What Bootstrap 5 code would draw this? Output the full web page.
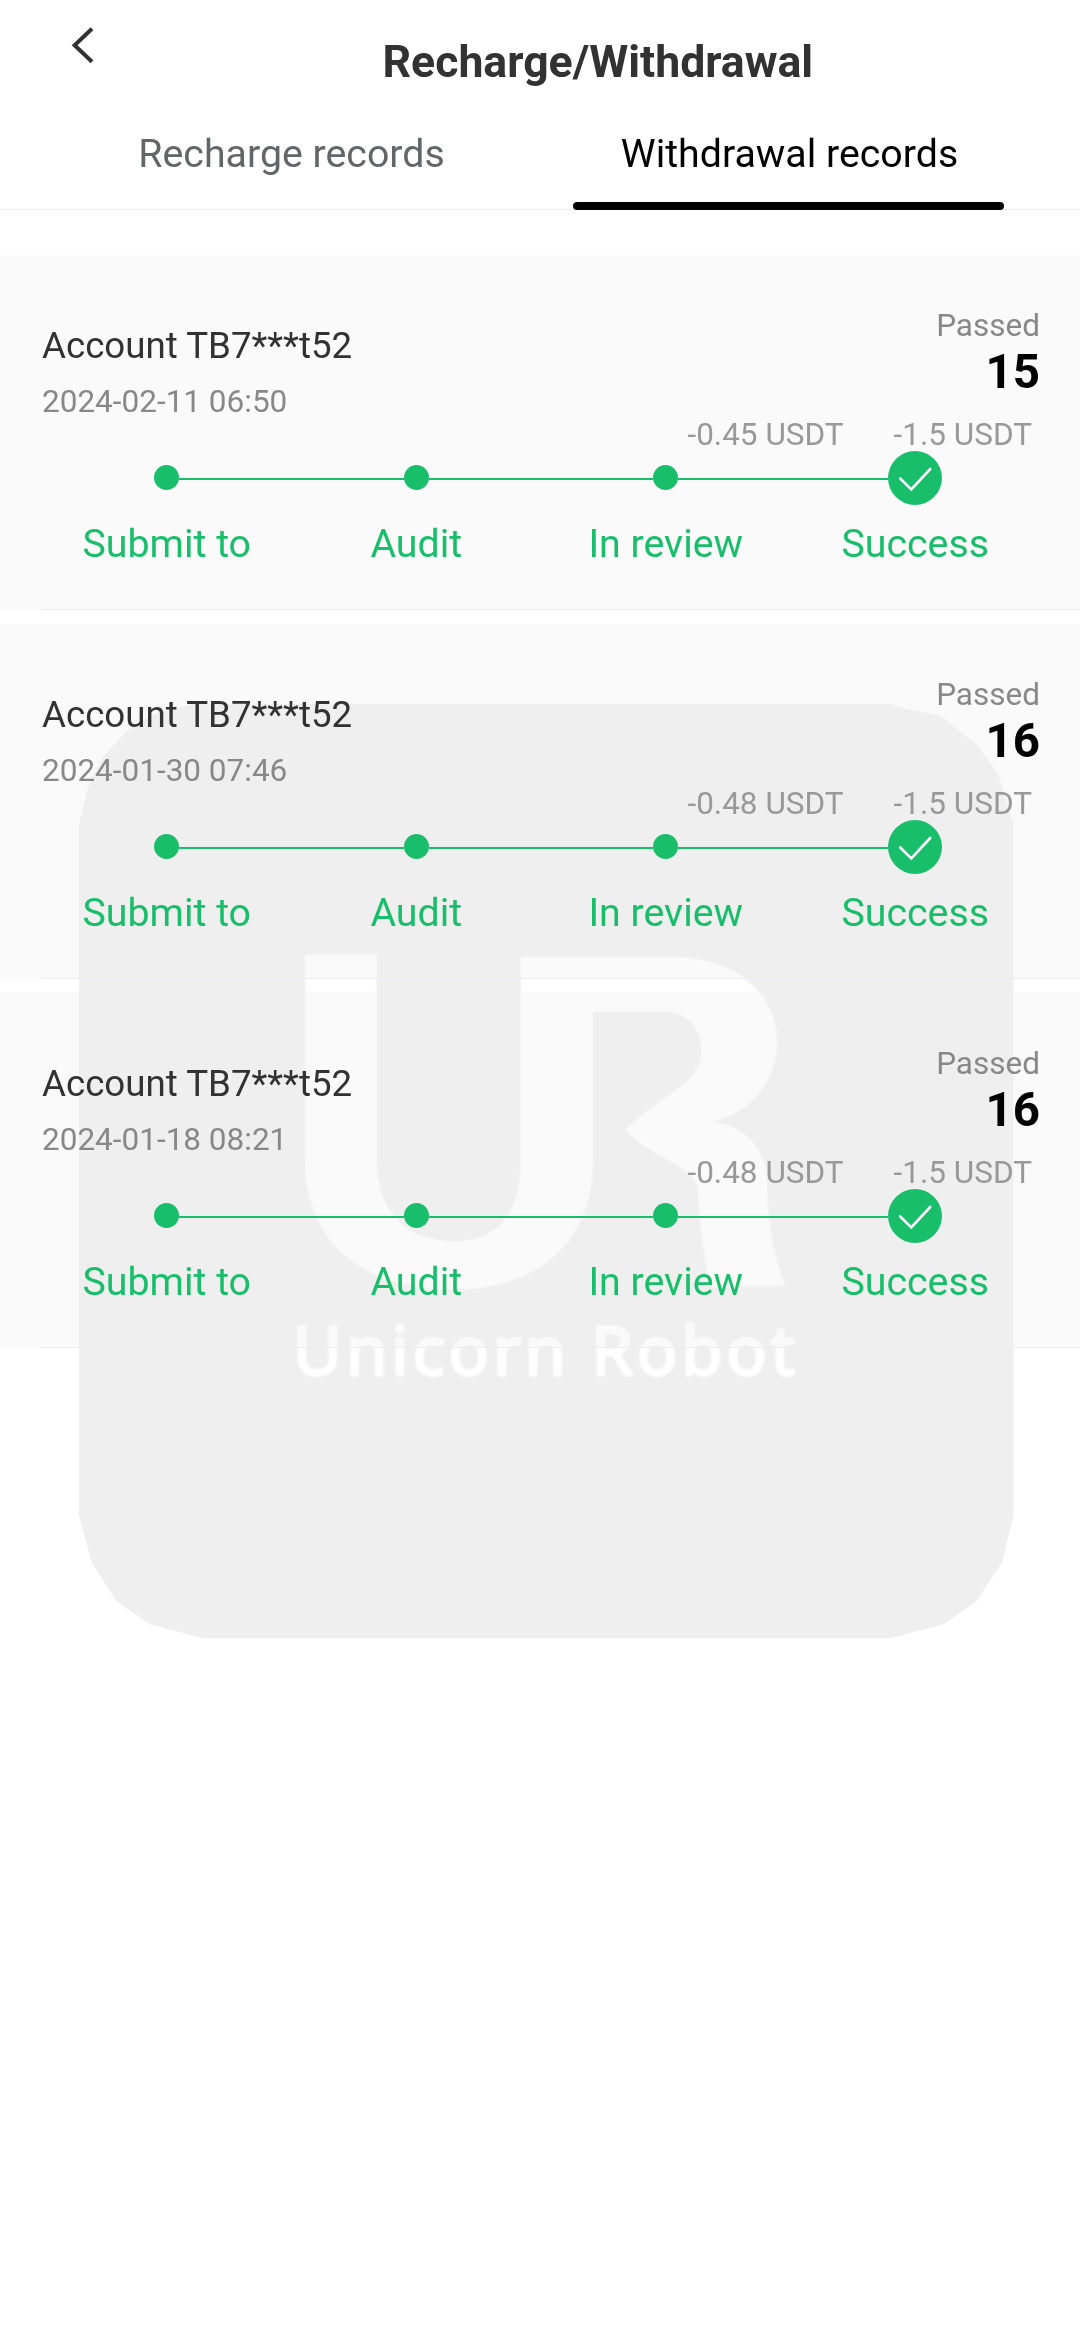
<!DOCTYPE html>
<html lang="en">
<head>
<meta charset="utf-8">
<meta name="viewport" content="width=device-width, initial-scale=1">
<title>Recharge/Withdrawal</title>
<link href="https://cdn.jsdelivr.net/npm/bootstrap@5.3.0/dist/css/bootstrap.min.css" rel="stylesheet">
<style>
  body { font-family: Roboto, sans-serif; color: #323233; background: #fff; overflow: hidden; }
  .screen { width: 1080px; height: 2340px; overflow: hidden; }
  .topbar { height: 110px; padding-left: 70px; }
  .back-icon { width: 24px; height: 40px; margin-top: 25px; flex: none; }
  .page-title { font-size: 44.6px; line-height: 60px; margin: 32px 0 0 288.5px; font-weight: 700; color: #323233; white-space: nowrap; }
  .record-tabs { height: 100px; padding: 0 43px; border-bottom: 1px solid #ebedf0; }
  .record-tabs .nav-link { padding: 19px 0 0; font-size: 39.3px; line-height: 50px; color: #646566; height: 100px; border: 0; }
  .record-tabs .nav-link.active { color: #000; }
  .tab-label { padding-left: 2px; }
  .tab-bar { width: 431px; height: 8px; border-radius: 4px; background: #000; }
  .record-list { padding-top: 45px; }
  .record { height: 355px; background: #fafafa; margin-bottom: 14px; }
  .record:nth-child(2) { margin-bottom: 13px; }
  .record:nth-child(3) { height: 356px; padding-top: 1px; }
  .record-body { height: 355px; z-index: 1; padding-left: 42px; }
  .record-inner { height: 354px; padding-right: 40px; }
  .record-info { height: 196px; }
  .account { font-size: 36.7px; line-height: 43px; margin-top: 69px; }
  .stamp { font-size: 31.5px; line-height: 41px; margin-top: 14px; color: #888; }
  .state { font-size: 31.5px; line-height: 41px; margin-top: 50px; color: #888; }
  .amount { font-size: 47.5px; line-height: 50px; font-weight: 700; color: #000; margin-top: 1px; }
  .fees { font-size: 31.5px; line-height: 41px; color: #999; margin-top: 17px; padding-right: 8px; gap: 50px; }
  .steps { color: #19be6b; height: 158px; }
  .step-node { height: 54px; width: 100%; }
  .step-line { height: 2px; background: #19be6b; flex: 1 1 0; margin-top: 2px; }
  .step-line.blank { background: transparent; }
  .step-dot { width: 25px; height: 25px; border-radius: 50%; background: #19be6b; flex: none; margin-bottom: 1px; }
  .step-check { width: 54px; height: 54px; flex: none; }
  .step-name { font-size: 39.3px; line-height: 50px; margin-top: 14px; }
  .divider { height: 1px; background: #ebedf0; }
  .watermark { left: 0; top: 0; z-index: 0; mix-blend-mode: darken; pointer-events: none; }
</style>
</head>
<body>
<div class="screen position-relative">
  <header class="topbar d-flex align-items-start">
    <svg class="back-icon" viewBox="0 0 24 40" fill="none" stroke="#323233" stroke-width="4"><path d="M22 3.8 4.6 20.2 22 36.8"/></svg>
    <h1 class="page-title">Recharge/Withdrawal</h1>
  </header>
  <nav class="record-tabs nav nav-fill flex-nowrap">
    <a class="nav-link w-50" href="#">Recharge records</a>
    <a class="nav-link active w-50 d-flex flex-column align-items-center" href="#"><span class="tab-label">Withdrawal records</span><span class="tab-bar mt-auto"></span></a>
  </nav>
  <main class="record-list" id="records"></main>

  <svg class="watermark position-absolute" width="1080" height="2340" viewBox="0 0 1080 2340">
    <path fill="#efefef" d="M193 704H891L905 708.500 941 716 977 745 998 773.500 1005 796.500 1013.500 825V1515.500L1002 1562 976 1601.700 943.500 1624.300 891 1638H202L150 1624.300 117 1601.700 91.500 1562 79 1515.500V825L89 783 103 757 127.500 730 151.500 715Z"/>
    <g fill="#fff" style="filter:blur(.9px)">
      <path d="M305.500 955H376.500V1160C376.500 1212 405 1241.700 454 1241.700C500 1241.700 521 1212 521 1160V957.300H670C738 957.300 776.500 995 776.500 1041.700C776.500 1084 748 1114 709 1122.300C745 1124 765 1150 766.500 1178C767 1217 771 1251 785 1285.700H711C703 1256 700.500 1220 698 1187C692 1164 650 1157 626 1130C664 1092 702 1085 702 1050C702 1027 686 1011.300 666 1011.300H592.500V1160C592.500 1240 540 1289 454 1289C360 1289 305.500 1240 305.500 1160Z"/>
      <text x="293" y="1375" font-family="Noto Sans, sans-serif" font-size="67" stroke="#fff" stroke-width="2.400" textLength="502" lengthAdjust="spacing">Unicorn Robot</text>
    </g>
  </svg>
</div>

<script src="https://cdn.jsdelivr.net/npm/bootstrap@5.3.0/dist/js/bootstrap.bundle.min.js"></script>
<script>
  const records = [
    { time: '2024-02-11 06:50', amount: '15', fee: '-0.45 USDT' },
    { time: '2024-01-30 07:46', amount: '16', fee: '-0.48 USDT' },
    { time: '2024-01-18 08:21', amount: '16', fee: '-0.48 USDT' }
  ];
  const names = ['Submit to', 'Audit', 'In review', 'Success'];
  const check = '<svg class="step-check" viewBox="0 0 54 54"><circle cx="27" cy="27" r="27" fill="#19be6b"/><path d="M12.200 27.500 23.300 38.400 42.200 18" fill="none" stroke="#fff" stroke-width="2.600" stroke-linecap="round"/></svg>';
  const steps = names.map((name, i) => `
    <div class="col text-center">
      <div class="step-node d-flex align-items-center">
        <span class="step-line ${i === 0 ? 'blank' : ''}"></span>
        ${i === 3 ? check : '<span class="step-dot"></span>'}
        <span class="step-line ${i === 3 ? 'blank' : ''}"></span>
      </div>
      <div class="step-name">${name}</div>
    </div>`).join('');
  document.getElementById('records').innerHTML = records.map(r => `
    <section class="record">
      <div class="record-body position-relative">
        <div class="record-inner">
          <div class="record-info d-flex justify-content-between">
            <div>
              <div class="account">Account TB7***t52</div>
              <div class="stamp">${r.time}</div>
            </div>
            <div class="text-end">
              <div class="state">Passed</div>
              <div class="amount">${r.amount}</div>
              <div class="fees d-flex justify-content-end"><span>${r.fee}</span><span>-1.5 USDT</span></div>
            </div>
          </div>
          <div class="steps row g-0">${steps}</div>
        </div>
        <div class="divider"></div>
      </div>
    </section>`).join('');
</script>
</body>
</html>
